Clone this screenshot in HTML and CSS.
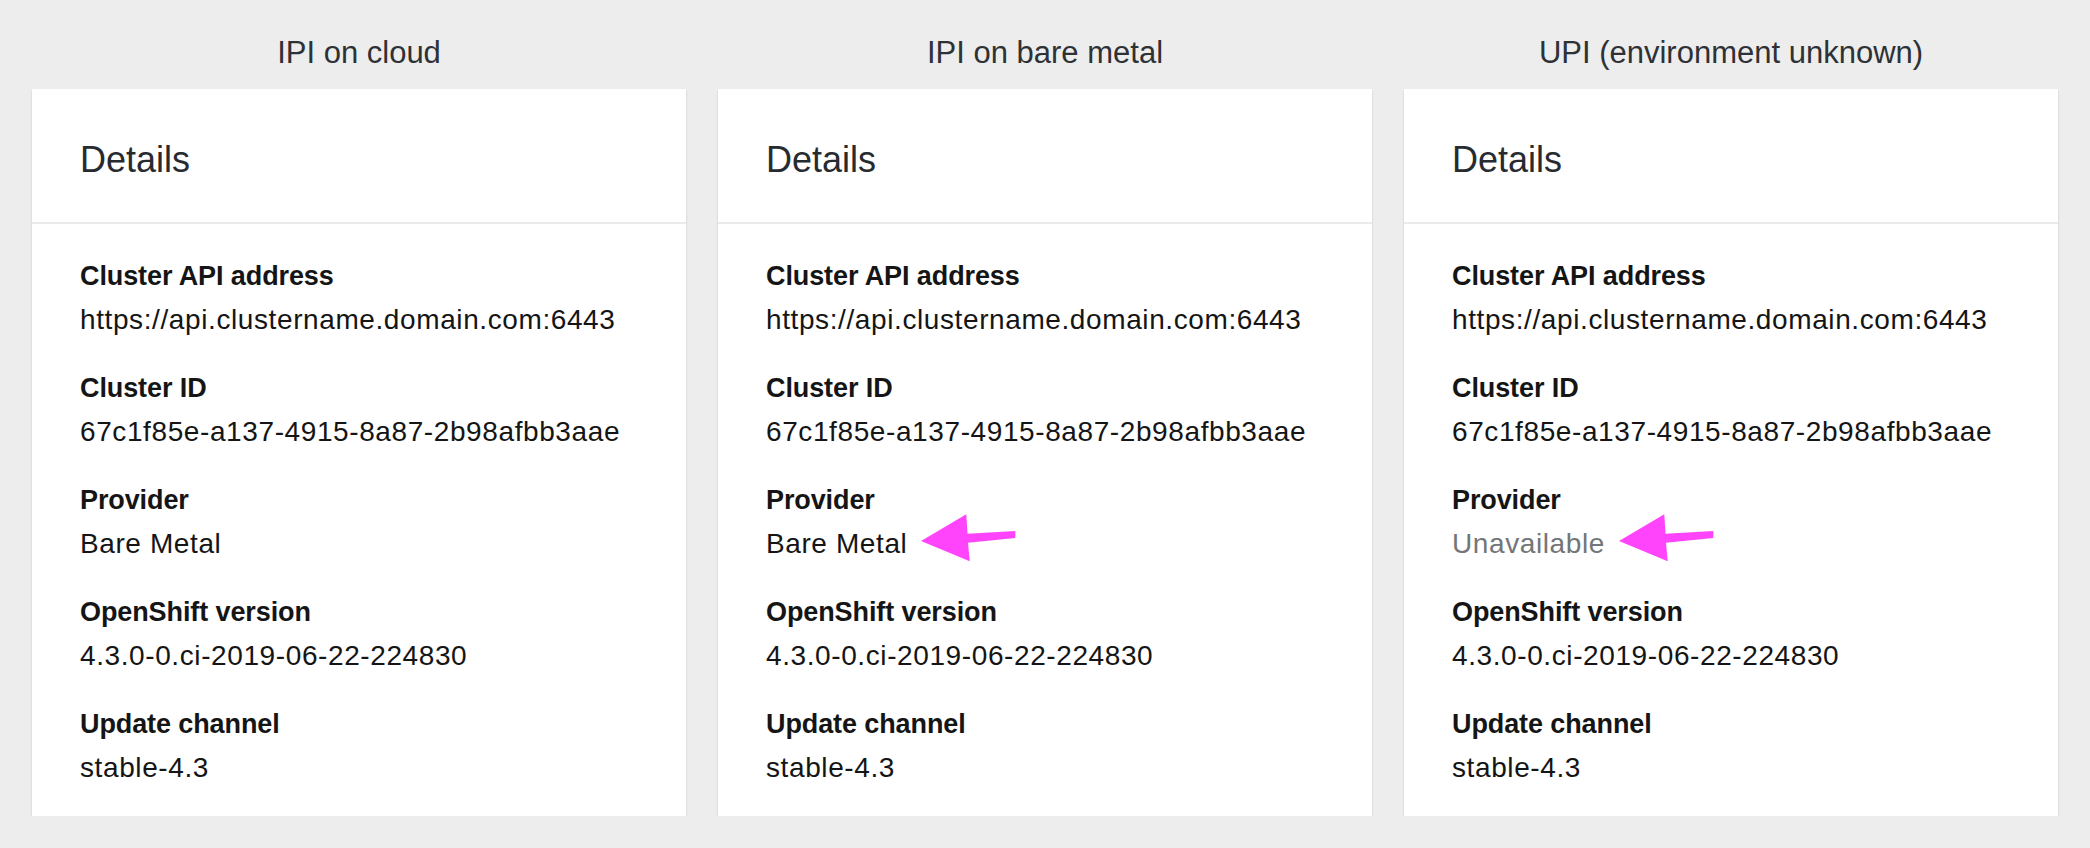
FILE: index.html
```html
<!DOCTYPE html>
<html lang="en">
<head>
<meta charset="utf-8">
<title>Cluster details</title>
<link rel="stylesheet" href="styles.css">
</head>
<body>
<div class="page">
  <section class="col">
    <h2 class="col-title">IPI on cloud</h2>
    <div class="card">
      <div class="card-head"><h3 class="card-title">Details</h3></div>
      <dl class="card-body">
        <dt>Cluster API address</dt>
        <dd>https://api.clustername.domain.com:6443</dd>
        <dt>Cluster ID</dt>
        <dd>67c1f85e-a137-4915-8a87-2b98afbb3aae</dd>
        <dt>Provider</dt>
        <dd>Bare Metal</dd>
        <dt>OpenShift version</dt>
        <dd>4.3.0-0.ci-2019-06-22-224830</dd>
        <dt>Update channel</dt>
        <dd>stable-4.3</dd>
      </dl>
    </div>
  </section>
  <section class="col">
    <h2 class="col-title">IPI on bare metal</h2>
    <div class="card">
      <div class="card-head"><h3 class="card-title">Details</h3></div>
      <dl class="card-body">
        <dt>Cluster API address</dt>
        <dd>https://api.clustername.domain.com:6443</dd>
        <dt>Cluster ID</dt>
        <dd>67c1f85e-a137-4915-8a87-2b98afbb3aae</dd>
        <dt>Provider</dt>
        <dd><span class="note">Bare Metal<svg class="arrow" viewBox="0 0 100 50" width="100" height="50" aria-hidden="true"><polygon points="2,28 47.3,1.3 48.5,20.7 96.3,18 96.3,25 49,29.7 50.7,48.3"/></svg></span></dd>
        <dt>OpenShift version</dt>
        <dd>4.3.0-0.ci-2019-06-22-224830</dd>
        <dt>Update channel</dt>
        <dd>stable-4.3</dd>
      </dl>
    </div>
  </section>
  <section class="col">
    <h2 class="col-title">UPI (environment unknown)</h2>
    <div class="card">
      <div class="card-head"><h3 class="card-title">Details</h3></div>
      <dl class="card-body">
        <dt>Cluster API address</dt>
        <dd>https://api.clustername.domain.com:6443</dd>
        <dt>Cluster ID</dt>
        <dd>67c1f85e-a137-4915-8a87-2b98afbb3aae</dd>
        <dt>Provider</dt>
        <dd><span class="note muted">Unavailable<svg class="arrow" viewBox="0 0 100 50" width="100" height="50" aria-hidden="true"><polygon points="2,28 47.3,1.3 48.5,20.7 96.3,18 96.3,25 49,29.7 50.7,48.3"/></svg></span></dd>
        <dt>OpenShift version</dt>
        <dd>4.3.0-0.ci-2019-06-22-224830</dd>
        <dt>Update channel</dt>
        <dd>stable-4.3</dd>
      </dl>
    </div>
  </section>
</div>
</body>
</html>
```

FILE: styles.css
```css
html, body {
  margin: 0;
  background: #ededed;
}

body {
  font-family: "Liberation Sans", Arial, sans-serif;
  color: #151515;
}

.page {
  display: grid;
  grid-template-columns: repeat(3, 1fr);
  gap: 32px;
  padding: 33px 32px 0;
}

.col {
  display: flex;
  flex-direction: column;
}

.col-title {
  margin: 0 0 16px;
  text-align: center;
  font-size: 31px;
  line-height: 40px;
  font-weight: 400;
  color: #2e3236;
}

.card {
  background: #fff;
  box-shadow: 0 1px 2px rgba(0, 0, 0, 0.10), 0 2px 3px rgba(0, 0, 0, 0.06);
}

.card-head {
  padding: 49px 48px 40px;
  border-bottom: 2px solid #ebebeb;
}

.card-title {
  margin: 0;
  font-size: 36px;
  line-height: 44px;
  font-weight: 400;
  color: #272b30;
}

.card-body {
  margin: 0;
  padding: 30px 48px 26px;
}

.card-body dt {
  font-weight: 700;
  font-size: 27px;
  line-height: 44px;
  letter-spacing: -0.1px;
  color: #151515;
}

.card-body dd {
  margin: 0 0 24px;
  font-size: 28px;
  line-height: 44px;
  letter-spacing: 0.6px;
  color: #151515;
}

.card-body dd:last-child {
  margin-bottom: 0;
}

.note {
  display: inline-block;
  position: relative;
}

.muted {
  color: #737679;
}

.arrow {
  position: absolute;
  left: calc(100% + 12px);
  top: -9px;
  fill: #ff44fc;
}
```
